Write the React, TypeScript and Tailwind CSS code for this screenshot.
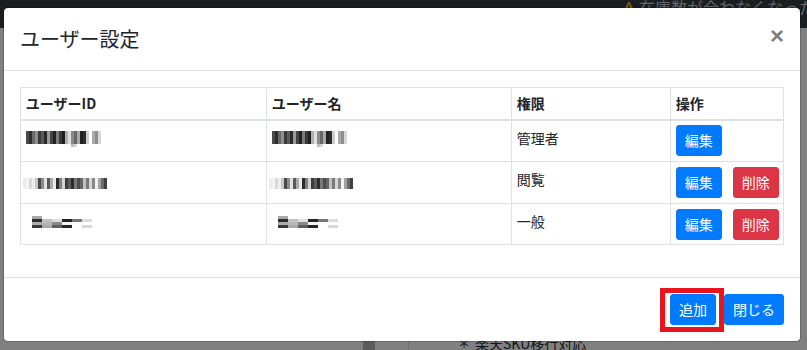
import React from 'react';

type MosaicProps = {
  rows: string[][];
  cellClass: string;
  className?: string;
};

// pixelated (redacted) user names
const Mosaic: React.FC<MosaicProps> = ({ rows, cellClass, className }) => (
  <div className={`flex flex-col ${className ?? ''}`} aria-hidden="true">
    {rows.map((row, r) => (
      <div key={r} className="flex">
        {row.map((c, i) => (
          <div key={i} className={cellClass} style={{ background: c }} />
        ))}
      </div>
    ))}
  </div>
);

const idMosaic1 = [
  ['#4a4a4a', '#2e2e2e', '#6a6a6a', '#8f8f8f', '#3a3a3a', '#5a5a5a', '#2a2a2a', '#9a9a9a', '#454545', '#222', '#7a7a7a', '#3a3a3a', '#1f1f1f', '#b0b0b0', '#e0e0e0', '#8a8a8a', '#686868', '#a8a8a8', '#222', '#2e2e2e', '#cfcfcf', '#fff', '#aaa', '#8e8e8e', '#d8d8d8'],
];
const idMosaic1b = [
  ['#fff', '#fff', '#fff', '#fff', '#fff', '#fff', '#fff', '#fff', '#fff', '#fff', '#fff', '#fff', '#fff', '#fff', '#fff', '#bbb', '#d8d8d8', '#fff'],
];
const idMosaic2 = [
  ['#ededed', '#f3f3f3', '#d9d9d9', '#eeeeee', '#c8c8c8', '#4a4a4a', '#8c8c8c', '#e2e2e2', '#5a5a5a', '#acacac', '#eaeaea', '#2a2a2a', '#7f7f7f', '#d4d4d4', '#3d3d3d', '#5d5d5d', '#2d2d2d', '#787878', '#4c4c4c', '#676767', '#c0c0c0', '#7a7a7a', '#d6d6d6', '#8b8b8b', '#f2f2f2', '#a1a1a1', '#6a6a6a', '#3f3f3f'],
];
const idMosaic3 = [
  ['#a8a8a8', '#fff', '#fff', '#fff', '#fff', '#fff'],
  ['#2b2b2b', '#c2c2c2', '#dedede', '#222', '#777', '#dcdcdc'],
  ['#ababab', '#b7b7b7', '#8a8a8a', '#f4f4f4', '#fff', '#fff'],
  ['#3a3a3a', '#a9a9a9', '#5e5e5e', '#262626', '#fff', '#d9d9d9'],
];

const RedactedName: React.FC<{ kind: number }> = ({ kind }) => {
  if (kind === 0) {
    return (
      <div className="pt-[6px]">
        <Mosaic rows={idMosaic1} cellClass="w-[3px] h-[13px]" />
        <Mosaic rows={idMosaic1b} cellClass="w-[3px] h-[3px]" />
      </div>
    );
  }
  if (kind === 1) {
    return (
      <div className="pt-[11px] -ml-[3px]">
        <Mosaic rows={idMosaic2} cellClass="w-[3px] h-[11px]" />
      </div>
    );
  }
  return (
    <div className="pt-[7px] pl-[6px]">
      <Mosaic rows={idMosaic3} cellClass="w-[10px] h-[3px]" />
    </div>
  );
};

const users = [
  { kind: 0, role: '管理者', canDelete: false },
  { kind: 1, role: '閲覧', canDelete: true },
  { kind: 2, role: '一般', canDelete: true },
];

const btn =
  'inline-block shrink-0 whitespace-nowrap rounded-[3px] border px-2 py-1 text-sm leading-[21px] text-white';

const cell = 'border border-[#dee2e6] p-[4.8px]';
const head = 'border border-b-2 border-[#dee2e6] p-[4.8px] font-bold';

export default function App() {
  return (
    <div
      className="relative w-[807px] h-[350px] overflow-hidden bg-[#808080] text-[#212529]"
      style={{ fontFamily: '"Noto Sans CJK JP", "Noto Sans", sans-serif' }}
    >
      {/* page behind the backdrop */}
      <div className="flex h-[28px] justify-end bg-[#1b1e21]">
        <div className="flex w-[185px] items-start gap-[3px] overflow-hidden whitespace-nowrap -mt-[5px] text-base text-[#62666a]">
          <svg width="14" height="13" viewBox="0 0 14 13" className="mt-[6px] shrink-0">
            <path d="M7 0 L14 13 L0 13 Z" fill="#806004" />
            <rect x="6.2" y="4" width="1.6" height="5" fill="#1b1e21" />
          </svg>
          <span>在庫数が合わなくなった場</span>
        </div>
      </div>
      <div className="flex h-[322px] flex-col justify-end">
        <div className="flex h-[10px] items-start text-sm text-[#111314]">
          <div className="w-[363px]" />
          <div className="h-[10px] w-[12px] bg-[#5c5c5c]" />
          <div className="w-[33px]" />
          <div className="h-[10px] w-px bg-[#707070]" />
          <div className="w-[49px]" />
          <span className="-mt-[4px] text-xs">＊</span>
          <span className="-mt-[7px] ml-[5px] whitespace-nowrap">楽天SKU移行対応</span>
        </div>
      </div>

      {/* modal */}
      <div className="absolute left-[3px] top-[7px] w-[798px] rounded-[5px] border border-black/20 bg-white bg-clip-padding">
        <div className="flex items-start justify-between border-b border-[#dee2e6] p-4">
          <h5 className="text-xl font-normal leading-[30px]">ユーザー設定</h5>
          <button
            className="-m-4 p-4 text-2xl font-bold leading-none text-black opacity-50"
            style={{ fontFamily: '"Liberation Sans", Arial, sans-serif' }}
          >
            ×
          </button>
        </div>

        <div className="p-4">
          <table className="mb-4 w-full table-fixed border-collapse border border-[#dee2e6] text-sm leading-[21px]">
            <thead>
              <tr className="text-left">
                <th className={`w-[246px] ${head}`}>ユーザーID</th>
                <th className={`w-[245px] ${head}`}>ユーザー名</th>
                <th className={`w-[159px] ${head}`}>権限</th>
                <th className={head}>操作</th>
              </tr>
            </thead>
            <tbody>
              {users.map((u, i) => (
                <tr key={i} className="align-top">
                  <td className={cell}>
                    <RedactedName kind={u.kind} />
                  </td>
                  <td className={cell}>
                    <RedactedName kind={u.kind} />
                  </td>
                  <td className={`${cell} pt-[7px]`}>{u.role}</td>
                  <td className={cell}>
                    <div className="flex gap-[11px]">
                      <button className={`${btn} border-[#007bff] bg-[#007bff]`}>編集</button>
                      {u.canDelete && (
                        <button className={`${btn} border-[#dc3545] bg-[#dc3545]`}>削除</button>
                      )}
                    </div>
                  </td>
                </tr>
              ))}
            </tbody>
          </table>
        </div>

        <div className="flex items-center justify-end gap-2 border-t border-[#dee2e6] px-4 py-4">
          <div className="relative">
            <button className={`${btn} border-[#007bff] bg-[#007bff]`}>追加</button>
            <span className="pointer-events-none absolute -bottom-[7px] -left-[10px] -right-[8px] -top-[6px] border-[5px] border-[#e8141e]" />
          </div>
          <button className={`${btn} border-[#007bff] bg-[#007bff]`}>閉じる</button>
        </div>
      </div>
    </div>
  );
}
